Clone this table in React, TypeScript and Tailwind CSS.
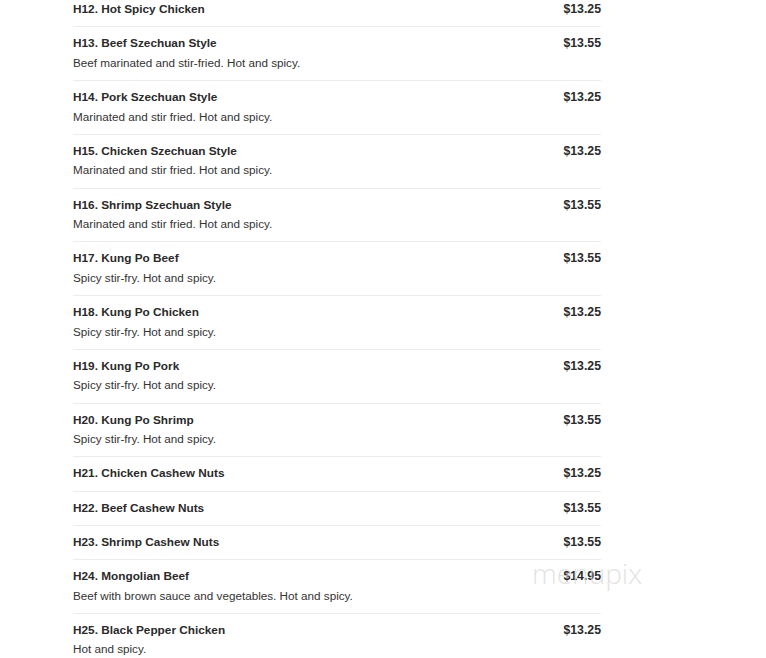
import React from "react";

type Item = { code: string; name: string; price: string; desc?: string };

const items: Item[] = [
  { code: "H12", name: "Hot Spicy Chicken", price: "$13.25" },
  { code: "H13", name: "Beef Szechuan Style", price: "$13.55", desc: "Beef marinated and stir-fried. Hot and spicy." },
  { code: "H14", name: "Pork Szechuan Style", price: "$13.25", desc: "Marinated and stir fried. Hot and spicy." },
  { code: "H15", name: "Chicken Szechuan Style", price: "$13.25", desc: "Marinated and stir fried. Hot and spicy." },
  { code: "H16", name: "Shrimp Szechuan Style", price: "$13.55", desc: "Marinated and stir fried. Hot and spicy." },
  { code: "H17", name: "Kung Po Beef", price: "$13.55", desc: "Spicy stir-fry. Hot and spicy." },
  { code: "H18", name: "Kung Po Chicken", price: "$13.25", desc: "Spicy stir-fry. Hot and spicy." },
  { code: "H19", name: "Kung Po Pork", price: "$13.25", desc: "Spicy stir-fry. Hot and spicy." },
  { code: "H20", name: "Kung Po Shrimp", price: "$13.55", desc: "Spicy stir-fry. Hot and spicy." },
  { code: "H21", name: "Chicken Cashew Nuts", price: "$13.25" },
  { code: "H22", name: "Beef Cashew Nuts", price: "$13.55" },
  { code: "H23", name: "Shrimp Cashew Nuts", price: "$13.55" },
  { code: "H24", name: "Mongolian Beef", price: "$14.95", desc: "Beef with brown sauce and vegetables. Hot and spicy." },
  { code: "H25", name: "Black Pepper Chicken", price: "$13.25", desc: "Hot and spicy." },
];

export default function App() {
  return (
    <div
      className="relative w-[766px] h-[658px] overflow-hidden bg-white text-[#222]"
      style={{ fontFamily: '"Liberation Sans", Arial, sans-serif' }}
    >
      <div className="ml-[73px] w-[528px] -mt-[7px]">
        {items.map((it, i) => (
          <div
            key={it.code}
            className={`pt-[8px] pb-[9.2px] ${i < items.length - 1 ? "border-b border-[#ececec]" : ""}`}
          >
            <div className="flex justify-between items-baseline h-[16px] leading-[16px] text-[12px] font-bold text-[#2a2a2a]">
              <span className="text-[11.8px]">
                {it.code}. {it.name}
              </span>
              <span className="text-[12.3px]">{it.price}</span>
            </div>
            {it.desc && (
              <div className="mt-[3.6px] h-[16px] leading-[16px] text-[11.7px] text-[#333]">
                {it.desc}
              </div>
            )}
          </div>
        ))}
      </div>
      <div
        className="absolute left-[532px] top-[559px] text-[28px] leading-none text-[#d8d8d8] opacity-70 select-none"
        style={{ fontFamily: '"Open Sans", sans-serif', fontWeight: 300 }}
      >
        menupix
      </div>
    </div>
  );
}
